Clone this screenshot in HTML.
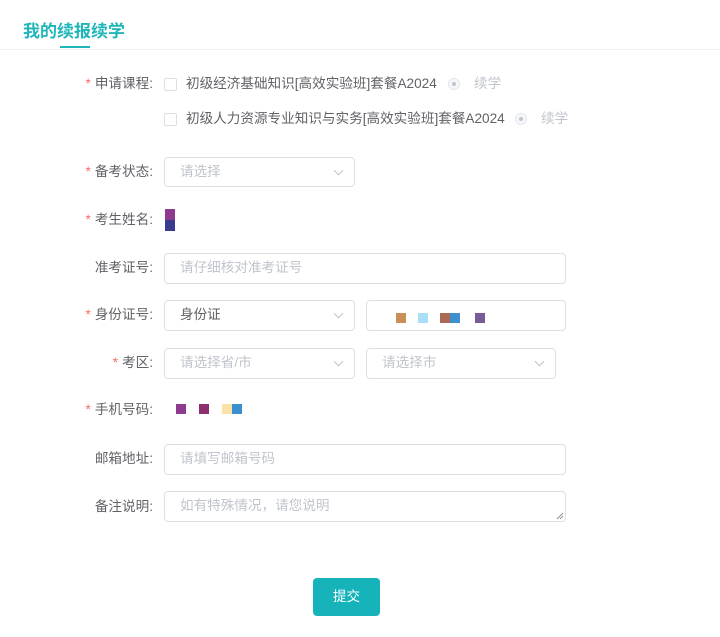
<!DOCTYPE html>
<html><head><meta charset="utf-8"><style>
body{margin:0;width:720px;height:637px;background:#fff;font-family:"Liberation Sans","Noto Sans CJK SC",sans-serif;font-size:13.6px;color:#606266;position:relative;overflow:hidden}
.a{position:absolute}
.title{left:23px;top:17px;font-size:17px;font-weight:bold;color:#1fb5b9}
.ul{left:60px;top:46px;width:30px;height:2px;background:#1fb5b9}
.hr{left:0;top:49px;width:720px;height:1px;background:#eef0f3}
.lab{width:153px;left:0;text-align:right;line-height:20px}
.lab i{color:#f56c6c;font-style:normal;margin-right:4px}
.box{border:1px solid #dcdfe6;border-radius:4px;box-sizing:border-box;padding-left:15px;line-height:28px;color:#c0c4cc}
.cb{width:13px;height:13px;border:1px solid #dcdfe6;border-radius:2px;box-sizing:border-box}
.rd{width:12px;height:12px;border:1px solid #e4e7ed;border-radius:50%;box-sizing:border-box;background:#f5f7fa}
.rd:after{content:"";position:absolute;left:3px;top:3px;width:4px;height:4px;border-radius:50%;background:#c0c4cc}
.chev{position:absolute;right:12px;top:9px;width:6px;height:6px;border-right:1px solid #c0c4cc;border-bottom:1px solid #c0c4cc;transform:rotate(45deg)}
.sq{position:absolute;width:10px;height:10px}
</style></head><body>
<div class="a title">我的续报续学</div>
<div class="a ul"></div><div class="a hr"></div>

<div class="a lab" style="top:74px"><i>*</i>申请课程:</div>
<div class="a cb" style="left:164px;top:78px"></div>
<div class="a" style="left:186px;top:74px;line-height:20px">初级经济基础知识[高效实验班]套餐A2024</div>
<div class="a rd" style="left:448px;top:78px"></div>
<div class="a" style="left:474px;top:74px;line-height:20px;color:#c0c4cc">续学</div>
<div class="a cb" style="left:164px;top:113px"></div>
<div class="a" style="left:186px;top:109px;line-height:20px">初级人力资源专业知识与实务[高效实验班]套餐A2024</div>
<div class="a rd" style="left:515px;top:113px"></div>
<div class="a" style="left:541px;top:109px;line-height:20px;color:#c0c4cc">续学</div>

<div class="a lab" style="top:162px"><i>*</i>备考状态:</div>
<div class="a box" style="left:164px;top:157px;width:191px;height:30px">请选择<span class="chev"></span></div>

<div class="a lab" style="top:210px"><i>*</i>考生姓名:</div>
<div class="sq" style="left:165px;top:209px;background:#8e3a8f;height:11px"></div>
<div class="sq" style="left:165px;top:220px;background:#3a3a8f;height:11px"></div>

<div class="a lab" style="top:258px">准考证号:</div>
<div class="a box" style="left:164px;top:253px;width:402px;height:31px">请仔细核对准考证号</div>

<div class="a lab" style="top:305px"><i>*</i>身份证号:</div>
<div class="a box" style="left:164px;top:300px;width:191px;height:31px;color:#606266">身份证<span class="chev"></span></div>
<div class="a box" style="left:366px;top:300px;width:200px;height:31px"></div>
<div class="sq" style="left:396px;top:313px;background:#c98e5a"></div>
<div class="sq" style="left:418px;top:313px;background:#a8def6"></div>
<div class="sq" style="left:440px;top:313px;background:#a86a55"></div>
<div class="sq" style="left:450px;top:313px;background:#3f8fcc"></div>
<div class="sq" style="left:475px;top:313px;background:#7a5a98"></div>

<div class="a lab" style="top:353px"><i>*</i>考区:</div>
<div class="a box" style="left:164px;top:348px;width:191px;height:31px">请选择省/市<span class="chev"></span></div>
<div class="a box" style="left:366px;top:348px;width:190px;height:31px">请选择市<span class="chev"></span></div>

<div class="a lab" style="top:400px"><i>*</i>手机号码:</div>
<div class="sq" style="left:176px;top:404px;background:#8e3a8f"></div>
<div class="sq" style="left:199px;top:404px;background:#8e3070"></div>
<div class="sq" style="left:222px;top:404px;background:#fbe3a8"></div>
<div class="sq" style="left:232px;top:404px;background:#3a8fd0"></div>

<div class="a lab" style="top:449px">邮箱地址:</div>
<div class="a box" style="left:164px;top:444px;width:402px;height:31px">请填写邮箱号码</div>

<div class="a lab" style="top:497px">备注说明:</div>
<div class="a box" style="left:164px;top:491px;width:402px;height:31px">如有特殊情况，请您说明</div>
<svg class="a" style="left:556px;top:512px" width="8" height="8"><path d="M1 7L7 1M4 7L7 4" stroke="#909399" stroke-width="1"/></svg>

<div class="a" style="left:313px;top:578px;width:67px;height:38px;background:#17b3bb;border-radius:4px;color:#fff;text-align:center;line-height:38px">提交</div>
</body></html>
